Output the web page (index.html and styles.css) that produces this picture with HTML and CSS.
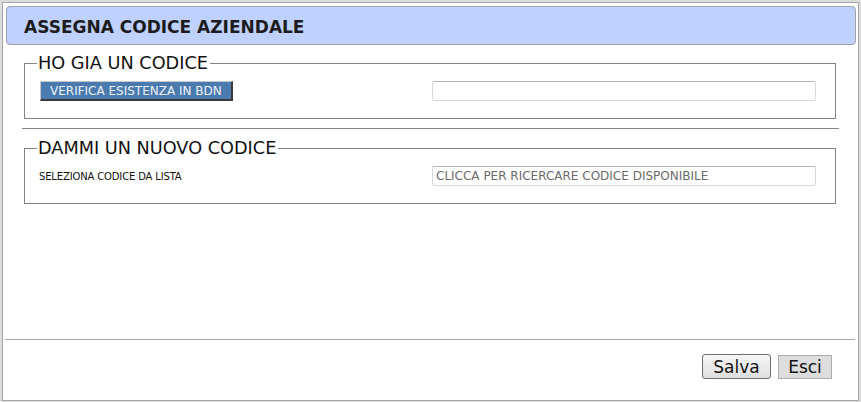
FILE: index.html
```html
<!DOCTYPE html>
<html lang="it">
<head>
<meta charset="utf-8">
<title>Assegna codice aziendale</title>
<link rel="stylesheet" href="styles.css">
</head>
<body>
<div class="dialog">
  <div class="titlebar">ASSEGNA CODICE AZIENDALE</div>
  <div class="content">
    <fieldset class="group group-first">
      <legend>HO GIA UN CODICE</legend>
      <div class="row">
        <button class="btn-verify" type="button">VERIFICA ESISTENZA IN BDN</button>
        <input class="field" type="text" value="">
      </div>
    </fieldset>
    <hr class="sep">
    <fieldset class="group group-second">
      <legend>DAMMI UN NUOVO CODICE</legend>
      <div class="row">
        <span class="label">SELEZIONA CODICE DA LISTA</span>
        <input class="field field-readonly" type="text" value="CLICCA PER RICERCARE CODICE DISPONIBILE" readonly>
      </div>
    </fieldset>
  </div>
  <div class="footer">
    <button class="btn-save" type="button">Salva</button>
    <button class="btn-exit" type="button">Esci</button>
  </div>
</div>
</body>
</html>
```
FILE: styles.css
```css
html, body {
  margin: 0;
  padding: 0;
}
body {
  background: #dcdcdc;
  padding: 2px 0 0 2px;
  height: 402px;
  box-sizing: border-box;
  overflow: hidden;
  font-family: "DejaVu Sans", Verdana, sans-serif;
}
.dialog {
  box-sizing: border-box;
  width: 857px;
  height: 399px;
  background: #ffffff;
  border: 1px solid #a4a4a4;
  padding: 3px 2px 0 3px;
  display: flex;
  flex-direction: column;
}
.titlebar {
  box-sizing: border-box;
  height: 39px;
  background: #bfd1fe;
  border: 1px solid #a3a3a3;
  border-radius: 4px;
  padding: 3px 0 0 17px;
  display: flex;
  align-items: center;
  font-weight: bold;
  font-size: 17px;
  color: #1c1c1c;
  flex: none;
}
.content {
  flex: 1;
  padding: 8px 17px 0 16px;
}
.group {
  margin: 0 3px 0 2px;
  border: 1px solid #858585;
  padding: 7px 19px 17px 14px;
  min-width: 0;
}
.group legend {
  font-size: 17.7px;
  line-height: 21px;
  color: #111;
  padding: 0 2px 0 1px;
  margin-left: -2px;
}
.group-second {
  padding-bottom: 17px;
}
.row {
  display: flex;
  align-items: center;
  height: 20px;
}
.btn-verify {
  box-sizing: border-box;
  margin: 0 0 0 1px;
  height: 20px;
  width: 193px;
  padding: 0 0 0 9px;
  text-align: left;
  background: #4a7aae;
  color: #eef3fb;
  font-family: "DejaVu Sans", Verdana, sans-serif;
  font-size: 12px;
  border-style: solid;
  border-width: 1px 2px 2px 1px;
  border-color: #c8c8c8 #3a3a3a #3a3a3a #c8c8c8;
  white-space: nowrap;
}
.field {
  box-sizing: border-box;
  margin: 0 0 0 auto;
  width: 384px;
  height: 20px;
  border: 1px solid #d3d8e0;
  border-top-color: #b4b4b4;
  border-radius: 2px;
  padding: 0 3px;
  font-family: "DejaVu Sans", Verdana, sans-serif;
  font-size: 12px;
  color: #6a6a6a;
  background: #fff;
  outline: none;
}
.label {
  font-size: 10px;
  letter-spacing: -0.15px;
  color: #111;
  padding-top: 1px;
}
.sep {
  border: none;
  border-top: 1px solid #858585;
  margin: 9px 0 9px 0;
  height: 0;
}
.footer {
  flex: none;
  height: 61px;
  box-sizing: border-box;
  margin: 0 1px 0 -1px;
  border-top: 1px solid #a8a8a8;
  padding: 14px 23px 0 0;
  display: flex;
  justify-content: flex-end;
  align-items: flex-start;
  gap: 7px;
}
.btn-save {
  box-sizing: border-box;
  width: 69px;
  height: 25px;
  border: 1px solid #6e6e6e;
  border-radius: 3px;
  background: linear-gradient(#f7f7f7, #dedede);
  font-family: "DejaVu Sans", Verdana, sans-serif;
  font-size: 17px;
  color: #111;
  padding: 0;
}
.btn-exit {
  box-sizing: border-box;
  margin-top: 1px;
  width: 54px;
  height: 24px;
  border: 1px solid #adadad;
  background: #dddddd;
  font-family: "DejaVu Sans", Verdana, sans-serif;
  font-size: 17px;
  color: #111;
  padding: 0;
}
```
